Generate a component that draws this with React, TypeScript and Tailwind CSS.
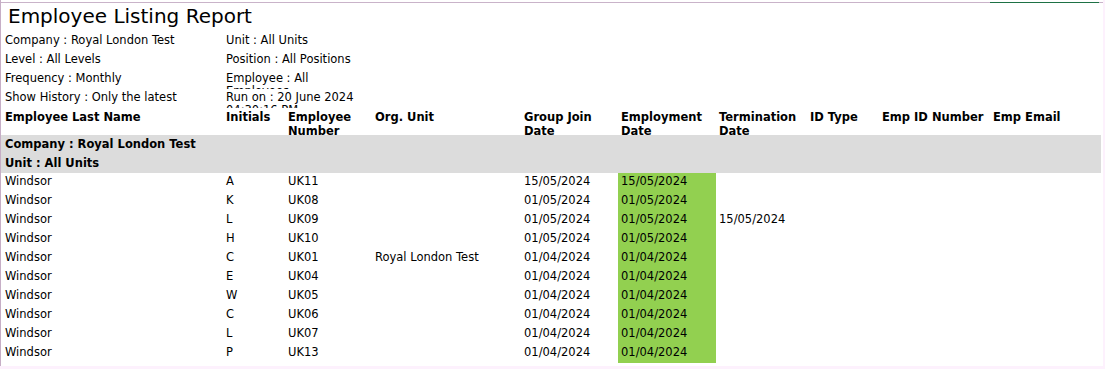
import React from "react";

const rows = [
  ["Windsor", "A", "UK11", "", "15/05/2024", "15/05/2024", ""],
  ["Windsor", "K", "UK08", "", "01/05/2024", "01/05/2024", ""],
  ["Windsor", "L", "UK09", "", "01/05/2024", "01/05/2024", "15/05/2024"],
  ["Windsor", "H", "UK10", "", "01/05/2024", "01/05/2024", ""],
  ["Windsor", "C", "UK01", "Royal London Test", "01/04/2024", "01/04/2024", ""],
  ["Windsor", "E", "UK04", "", "01/04/2024", "01/04/2024", ""],
  ["Windsor", "W", "UK05", "", "01/04/2024", "01/04/2024", ""],
  ["Windsor", "C", "UK06", "", "01/04/2024", "01/04/2024", ""],
  ["Windsor", "L", "UK07", "", "01/04/2024", "01/04/2024", ""],
  ["Windsor", "P", "UK13", "", "01/04/2024", "01/04/2024", ""],
];

const gridCols =
  "grid grid-cols-[222px_62px_87px_149px_97px_98px_91px_72px_111px_111px]";

export default function App() {
  return (
    <div
      className="w-[1105px] h-[369px] bg-[#fdf1fd] overflow-hidden text-black"
      style={{ fontFamily: '"DejaVu Sans", Verdana, sans-serif' }}
    >
      <div className="w-[1103px] h-[366px] bg-white border-l border-[#c6aec6] flex flex-col overflow-hidden">
        <div className="h-[2px] shrink-0" />
        <div className="flex h-px shrink-0">
          <div className="flex-1 bg-[#c9b3c9]" />
          <div className="w-[109px] bg-[#1e7145]" />
          <div className="w-[4px] bg-[#c9b3c9]" />
        </div>
        <div className="h-[29px] shrink-0 pl-[7px] text-[20px] leading-[26px]">
          Employee Listing Report
        </div>
        <div className="grid grid-cols-[225px_140px] text-[11.5px] leading-[13px] shrink-0">
          {[
            ["Company : Royal London Test", "Unit : All Units"],
            ["Level : All Levels", "Position : All Positions"],
            ["Frequency : Monthly", "Employee : All Employees"],
            ["Show History : Only the latest", "Run on : 20 June 2024 04:30:16 PM"],
          ].map(([a, b], i) => (
            <React.Fragment key={i}>
              <div className="h-[19px] overflow-hidden pl-[4px] pt-[2px]">{a}</div>
              <div className="h-[19px] overflow-hidden pt-[2px]">{b}</div>
            </React.Fragment>
          ))}
        </div>
        <div className={`${gridCols} h-[27px] shrink-0 text-[11.5px] leading-[14px] font-bold`}>
          <div className="pl-[4px] pt-[2px]">Employee Last Name</div>
          <div className="pl-[3px] pt-[2px]">Initials</div>
          <div className="pl-[3px] pt-[2px]">Employee Number</div>
          <div className="pl-[3px] pt-[2px]">Org. Unit</div>
          <div className="pl-[3px] pt-[2px]">Group Join Date</div>
          <div className="pl-[3px] pt-[2px]">Employment Date</div>
          <div className="pl-[3px] pt-[2px]">Termination Date</div>
          <div className="pl-[3px] pt-[2px]">ID Type</div>
          <div className="pl-[3px] pt-[2px]">Emp ID Number</div>
          <div className="pl-[3px] pt-[2px]">Emp Email</div>
        </div>
        <div className="w-[1100px] bg-[#dcdcdc] text-[11.5px] leading-[15px] font-bold shrink-0">
          <div className="h-[19px] pl-[4px] pt-[2px]">Company : Royal London Test</div>
          <div className="h-[19px] pl-[4px] pt-[2px]">Unit : All Units</div>
        </div>
        <div className="text-[11.5px] leading-[15px] shrink-0">
          {rows.map((r, i) => (
            <div key={i} className={`${gridCols} h-[19px]`}>
              <div className="pl-[4px] pt-[1px]">{r[0]}</div>
              <div className="pl-[3px] pt-[1px]">{r[1]}</div>
              <div className="pl-[3px] pt-[1px]">{r[2]}</div>
              <div className="pl-[3px] pt-[1px]">{r[3]}</div>
              <div className="pl-[3px] pt-[1px]">{r[4]}</div>
              <div className="pl-[3px] pt-[1px] bg-[#92d050]">{r[5]}</div>
              <div className="pl-[3px] pt-[1px]">{r[6]}</div>
              <div />
              <div />
              <div />
            </div>
          ))}
        </div>
      </div>
    </div>
  );
}
